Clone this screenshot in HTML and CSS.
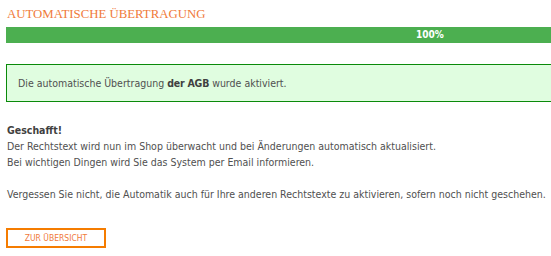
FILE: index.html
```html
<!DOCTYPE html>
<html lang="de">
<head>
<meta charset="utf-8">
<link rel="stylesheet" href="styles.css">
</head>
<body>
<div class="page">
  <h1 class="title">AUTOMATISCHE ÜBERTRAGUNG</h1>
  <div class="progress"><div class="progress-bar">100%</div></div>
  <div class="alert">Die automatische Übertragung <b>der AGB</b> wurde aktiviert.</div>
  <p class="text"><b>Geschafft!</b><br>Der Rechtstext wird nun im Shop überwacht und bei Änderungen automatisch aktualisiert.<br>Bei wichtigen Dingen wird Sie das System per Email informieren.</p>
  <p class="text">Vergessen Sie nicht, die Automatik auch für Ihre anderen Rechtstexte zu aktivieren, sofern noch nicht geschehen.</p>
  <a class="btn" href="#">ZUR ÜBERSICHT</a>
</div>
</body>
</html>
```
FILE: styles.css
```css
html, body { margin: 0; padding: 0; overflow: hidden; background: #fff; }
.page {
  width: 848px;
  padding: 6px 0 0 6px;
  font-family: "DejaVu Sans Condensed", "Liberation Sans", sans-serif;
  font-size: 10.5px;
  line-height: 16px;
  color: #505050;
}
.title {
  margin: 0 0 0 1px;
  font-family: "Liberation Serif", serif;
  font-weight: normal;
  font-size: 12.8px;
  line-height: 16px;
  color: #f07a3a;
}
.progress { margin-top: 5px; height: 16px; background: #eee; }
.progress-bar {
  height: 16px;
  width: 100%;
  background: #4caf50;
  color: #fff;
  text-align: center;
  font-size: 10px;
  line-height: 16px;
  font-weight: bold;
}
.alert {
  margin-top: 21px;
  border: 1px solid #0a8a0a;
  background: #e0fde0;
  padding: 10px 11px;
}
.alert b { color: #404040; letter-spacing: -0.2px; }
.text { margin: 20px 0 0 1px; }
.text b { color: #404040; }
.text + .text { margin-top: 16px; }
.btn {
  display: inline-block;
  box-sizing: border-box;
  margin-top: 26px;
  width: 100px;
  height: 20px;
  border: 2px solid #f57c00;
  color: #f07a3a;
  text-decoration: none;
  text-align: center;
  font-size: 8.5px;
  line-height: 16px;
}
```
